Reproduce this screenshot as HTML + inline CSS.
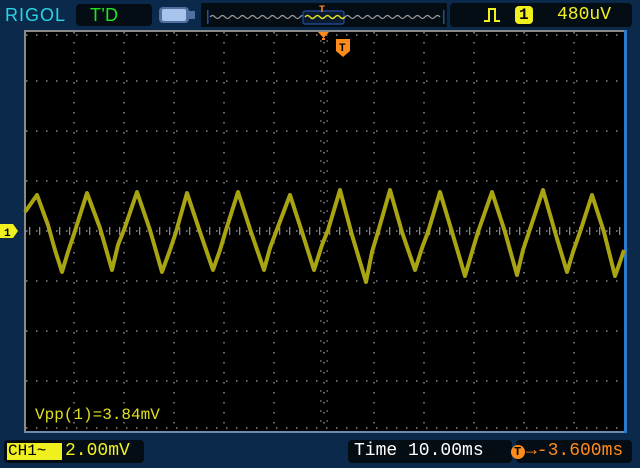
<!DOCTYPE html>
<html><head><meta charset="utf-8"><style>
body{margin:0;width:640px;height:468px;background:#0b2a4b;position:relative;overflow:hidden;font-family:"Liberation Mono","DejaVu Sans Mono",monospace}
.box{position:absolute;background:#000;border-radius:4px}
.t{position:absolute;white-space:pre;line-height:1}
</style></head><body>
<div class="t" style="left:5px;top:6px;font-size:18px;color:#2ad4e6;font-family:'Liberation Sans',sans-serif;letter-spacing:1px">RIGOL</div>
<div class="box" style="left:76px;top:4px;width:76px;height:22px;background:#040c14"></div>
<div class="t" style="left:90px;top:6px;font-size:18px;color:#1ee61e;font-family:'Liberation Sans',sans-serif">T’D</div>
<div style="position:absolute;left:159px;top:7px;width:30px;height:16px;background:#5070a0;border-radius:4px"></div>
<div style="position:absolute;left:162px;top:9px;width:24px;height:12px;background:#a8c4ec;border-radius:2px"></div>
<div style="position:absolute;left:189px;top:11px;width:6px;height:8px;background:#5070a0"></div>
<div class="box" style="left:201px;top:3px;width:246px;height:24px;background:#040c14;border-radius:2px"></div>
<svg style="position:absolute;left:0;top:0" width="640" height="468">
<rect x="207" y="10" width="1.5" height="14" fill="#2050a0"/>
<rect x="443" y="10" width="1.5" height="14" fill="#2050a0"/>
<path d="M210 17 q2.5 -3 5 0 t5 0 t5 0 t5 0 t5 0 t5 0 t5 0 t5 0 t5 0 t5 0 t5 0 t5 0 t5 0 t5 0 t5 0 t5 0 t5 0 t5 0 t5 0 t5 0 t5 0" fill="none" stroke="#9a9a9a" stroke-width="1.3"/>
<path d="M345 17 q2.5 -3 5 0 t5 0 t5 0 t5 0 t5 0 t5 0 t5 0 t5 0 t5 0 t5 0 t5 0 t5 0 t5 0 t5 0 t5 0 t5 0 t5 0 t5 0 t5 0" fill="none" stroke="#9a9a9a" stroke-width="1.3"/>
<rect x="303" y="11" width="41" height="13" rx="2" fill="#0a1a30" stroke="#2050a0" stroke-width="1.2"/>
<path d="M305 17 q2.5 -3 5 0 t5 0 t5 0 t5 0 t5 0 t5 0 t5 0 t5 0" fill="none" stroke="#e0e020" stroke-width="1.4"/>
<text x="319" y="12" font-size="10" fill="#ff8c1a" font-family="Liberation Mono" font-weight="bold">T</text>
<!-- screen -->
<rect x="24" y="30" width="602" height="403" fill="#000"/>
<rect x="24" y="30" width="602" height="2" fill="#8a8a8a"/>
<rect x="24" y="30" width="2" height="403" fill="#8a8a8a"/>
<rect x="24" y="431" width="602" height="2" fill="#6a8ab0"/>
<rect x="624" y="30" width="3" height="403" fill="#2a7ad0"/>
<g>
<path d="M74 32v400M124 32v400M174 32v400M224 32v400M274 32v400M324 32v400M374 32v400M424 32v400M474 32v400M524 32v400M574 32v400" stroke="#8a8a8a" stroke-width="1.5" stroke-dasharray="1.5 8.5"/>
<path d="M26 81h598M26 131h598M26 181h598M26 231h598M26 281h598M26 331h598M26 381h598" stroke="#8a8a8a" stroke-width="1.5" stroke-dasharray="1.5 8.5"/>
<path d="M26 35h598M26 428h598" stroke="#8a8a8a" stroke-width="1.5" stroke-dasharray="1.5 8.5"/>
<path d="M321 32h6" stroke="#8a8a8a" stroke-width="1.2" stroke-dasharray="0" />
<path d="M321 36v400" stroke="none"/>
<path d="M320 41h8M320 51h8M320 61h8M320 71h8M320 91h8M320 101h8M320 111h8M320 121h8M320 141h8M320 151h8M320 161h8M320 171h8M320 191h8M320 201h8M320 211h8M320 221h8M320 241h8M320 251h8M320 261h8M320 271h8M320 291h8M320 301h8M320 311h8M320 321h8M320 341h8M320 351h8M320 361h8M320 371h8M320 391h8M320 401h8M320 411h8M320 421h8" stroke="#8a8a8a" stroke-width="1.3" stroke-dasharray="1.5 5 1.5"/>
<path d="M26 231h598" stroke="#8a8a8a" stroke-width="8" stroke-dasharray="1.3 8.7" stroke-dashoffset="-3"/>
</g>
<polyline fill="none" stroke="#a8a412" stroke-width="4" stroke-linejoin="round" points="25,212 37,195 48,225 55,250 62,272 68,252 74,234 87,193 100,228 112,270 118,245 124,230 137,192 150,230 162,272 170,250 176,232 187,193 200,232 213,270 220,250 226,230 238,192 251,232 264,270 270,248 276,232 290,195 302,232 314,270 322,245 328,230 340,190 352,235 366,282 372,252 378,232 390,190 402,232 415,270 422,248 428,232 440,192 452,232 465,276 472,252 478,232 492,192 505,232 517,275 523,250 529,232 543,190 555,232 567,272 573,252 580,232 592,195 604,232 615,276 620,262 624,250"/>
<!-- trigger markers -->
<path d="M318 32h11l-5.5 6z" fill="#ff8c1a"/>
<rect x="322" y="38" width="3" height="2" fill="#ff8c1a"/>
<path d="M336 39h14v12l-7 6l-7-6z" fill="#ff8c1a"/>
<text x="339" y="51" font-size="11" font-weight="bold" fill="#000" font-family="Liberation Mono">T</text>
<!-- ch1 marker -->
<path d="M0 224h13l5 7l-5 7h-13z" fill="#f0f020"/>
<text x="4" y="236" font-size="11" font-weight="bold" fill="#000" font-family="Liberation Mono">1</text>
</svg>
<div class="box" style="left:450px;top:3px;width:182px;height:24px;background:#040c14"></div>
<svg style="position:absolute;left:482px;top:6px" width="20" height="18"><path d="M2 15h5V3h6v12h5" fill="none" stroke="#f0f020" stroke-width="2"/></svg>
<div style="position:absolute;left:515px;top:6px;width:18px;height:18px;border-radius:4px;background:#f0f020"></div>
<div class="t" style="left:519px;top:7px;font-size:16px;color:#000;font-weight:bold">1</div>
<div class="t" style="left:557px;top:6px;font-size:18px;color:#f0f020">480uV</div>
<div class="t" style="left:35px;top:407px;font-size:16px;color:#e0e020">Vpp(1)=3.84mV</div>
<div class="box" style="left:4px;top:440px;width:140px;height:23px;background:#040c14"></div>
<div style="position:absolute;left:7px;top:443px;width:55px;height:17px;background:#f0f020"></div>
<div class="t" style="left:8px;top:443px;font-size:16px;color:#000">CH1~</div>
<div class="t" style="left:65px;top:442px;font-size:18px;color:#f0f020">2.00mV</div>
<div class="box" style="left:348px;top:440px;width:164px;height:23px;background:#040c14"></div>
<div class="t" style="left:354px;top:442px;font-size:18px;color:#fff">Time 10.00ms</div>
<div class="box" style="left:516px;top:440px;width:116px;height:23px;background:#040c14"></div>
<div style="position:absolute;left:511px;top:445px;width:14px;height:14px;border-radius:7px;background:#ff8c1a"></div>
<div class="t" style="left:514px;top:446px;font-size:12px;color:#000;font-weight:bold">T</div>
<div class="t" style="left:526px;top:442px;font-size:18px;color:#ff8c1a">→-3.600ms</div>
</body></html>
